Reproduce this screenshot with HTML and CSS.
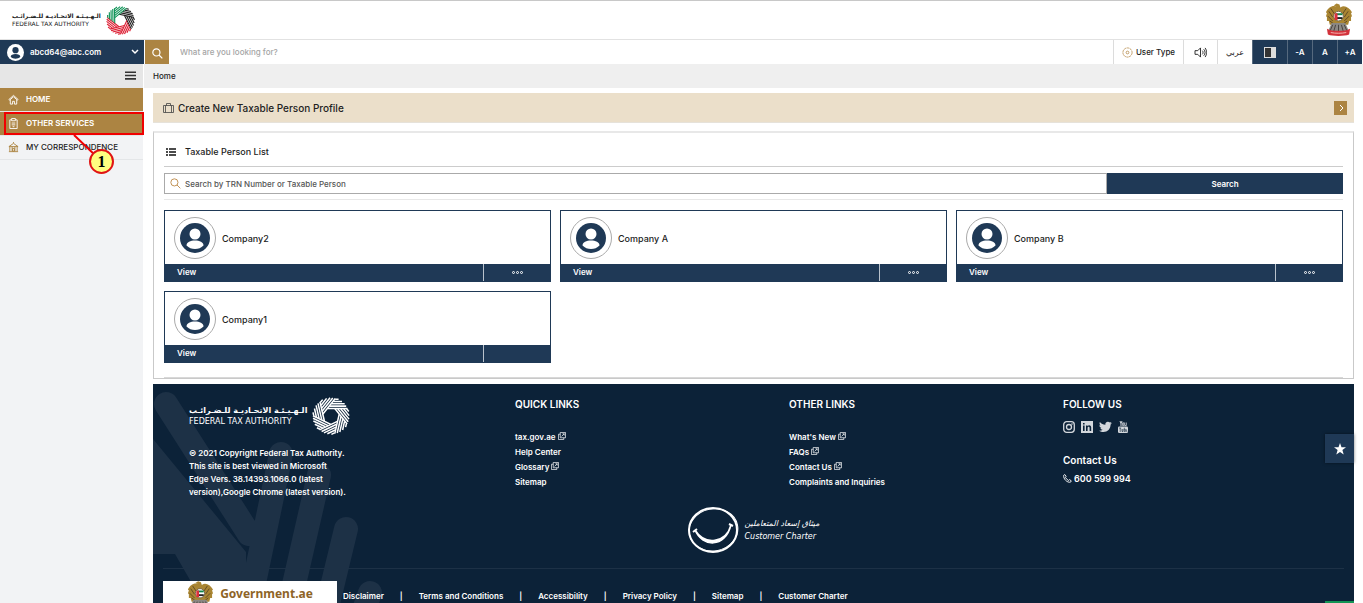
FILE: index.html
```html
<!DOCTYPE html>
<html lang="en">
<head>
  <meta charset="UTF-8">
  <title>Federal Tax Authority</title>
  <link rel="stylesheet" href="styles.css">
</head>
<body>
  <!-- shared icons -->
  <svg class="defs" aria-hidden="true">
    <symbol id="blades" viewBox="-50 -50 100 100" overflow="visible">
      <path d="M-9 -20H43M-4 -26H40M1 -32H36M6 -38H29M11 -44H20"/>
    </symbol>
    <symbol id="user" viewBox="0 0 30 30">
      <circle cx="15" cy="15" r="15" fill="currentColor"/>
      <circle cx="15" cy="11" r="5.5" fill="var(--hole)"/>
      <path d="M6.500 22.500c0-3.500 4-5 8.500-5s8.500 1.500 8.500 5c-2.500 2.500-5 3.500-8.500 3.500s-6-1-8.500-3.500z" fill="var(--hole)"/>
    </symbol>
    <symbol id="search" viewBox="0 0 12 12">
      <circle cx="4.800" cy="4.800" r="3.900"/>
      <path d="M7.600 7.600L11.300 11.300"/>
    </symbol>
    <symbol id="ext" viewBox="0 0 9 9">
      <path d="M2.500.5h6v6h-6zM2.500 2.500h-2v6h6v-2M4 5l3-3M5 2h2v2"/>
    </symbol>
    <symbol id="emblem" viewBox="0 0 28 34">
      <path d="M12 3C8 1 3 4 1 9l1 1-1 3 1 1 0 4 2 0 1 4 3 0 2 3 9 0 2-3 3 0 1-4 2 0 0-4 1-1-1-3 1-1C25 4 20 1 16 4l-1-3-3-1-3 2z" fill="#a98532"/>
      <path d="M4 8l4 6M3 13l5 5M6 5l4 6M24 8l-4 6M25 13l-5 5M22 5l-4 6M5 18l4 3M23 18l-4 3" stroke="#604a25" stroke-width="1" fill="none"/>
      <path d="M7 20h14l4 9H3z" fill="#8b8884"/>
      <path d="M8 22l-3 7M11 22l-2 7M14 22v7M17 22l2 7M20 22l3 7" stroke="#47423e" stroke-width="1"/>
      <path d="M2 26c5 3 19 3 24 0l-1 6c-5 2-17 2-22 0z" fill="#d3323b"/>
      <path d="M6 30c5 1 11 1 16 0" stroke="#f5b4b0" fill="none"/>
      <circle cx="14" cy="13" r="5" fill="#fff" stroke="#766548"/>
      <path d="M11 10h7v2h-7z" fill="#12834a"/>
      <path d="M11 14h7v2h-7z" fill="#222"/>
      <path d="M10 10h3v7h-3z" fill="#dc303b"/>
    </symbol>
  </svg>

  <header class="top">
    <a class="logo" href="#">
      <span class="logo-text">
        <span lang="ar" dir="rtl">الـهـيـئـة الاتحـاديـة للـضـرائـب</span>
        <b>FEDERAL TAX AUTHORITY</b>
      </span>
      <svg class="ring" viewBox="-50 -50 100 100" stroke-width="4" fill="none">
        <g stroke="#222">
          <path transform="rotate(12)" d="M-9 -20H43M-4 -26H40M1 -32H36M6 -38H29M11 -44H20"/>
          <path transform="rotate(63)" d="M-9 -20H43M-4 -26H40M1 -32H36M6 -38H29M11 -44H20"/>
        </g>
        <g stroke="#dd2034">
          <path transform="rotate(115)" d="M-9 -20H43M-4 -26H40M1 -32H36M6 -38H29M11 -44H20"/>
          <path transform="rotate(166)" d="M-9 -20H43M-4 -26H40M1 -32H36M6 -38H29M11 -44H20"/>
          <path transform="rotate(218)" d="M-9 -20H43M-4 -26H40M1 -32H36M6 -38H29M11 -44H20"/>
        </g>
        <g stroke="#13955a">
          <path transform="rotate(269)" d="M-9 -20H43M-4 -26H40M1 -32H36M6 -38H29M11 -44H20"/>
          <path transform="rotate(321)" d="M-9 -20H43M-4 -26H40M1 -32H36M6 -38H29M11 -44H20"/>
        </g>
      </svg>
    </a>
    <svg class="emblem"><use href="#emblem"/></svg>
  </header>

  <div class="toolbar">
    <button class="profile">
      <svg class="profile-pic"><use href="#user"/></svg>
      <span>abcd64@abc.com</span>
      <svg class="chevron" viewBox="0 0 8 6"><path d="M1 1l3 3 3-3"/></svg>
    </button>
    <button class="search-btn" aria-label="Search"><svg><use href="#search"/></svg></button>
    <input class="search-input" type="text" placeholder="What are you looking for?" aria-label="Site search">
    <button class="tool user-type">
      <svg viewBox="0 0 12 12"><circle cx="6" cy="6" r="5" stroke-dasharray="2.600 .6"/><circle cx="6" cy="6" r="1.500"/></svg>
      User Type
    </button>
    <button class="tool sound" aria-label="Listen">
      <svg viewBox="0 0 14 12"><path d="M1 4h3l3-3v10L4 8H1zM9 4c1 1 1 3 0 4M10.500 2.500c2 2 2 5 0 7M12 1c2.200 3 2.200 7 0 10"/></svg>
    </button>
    <button class="tool lang" lang="ar">عربي</button>
    <button class="tool dark contrast" aria-label="Contrast">
      <svg viewBox="0 0 12 11"><path d="M0 0h12v11H0z" fill="#ddd"/><path d="M1 1h6v9H1z" fill="#333"/></svg>
    </button>
    <button class="tool dark">-A</button>
    <button class="tool dark">A</button>
    <button class="tool dark">+A</button>
  </div>

  <div class="layout">
    <aside class="sidebar">
      <button class="menu-toggle" aria-label="Toggle menu">
        <svg viewBox="0 0 10 8"><path d="M0 1h10M0 4h10M0 7h10"/></svg>
      </button>
      <nav>
        <a class="item active" href="#">
          <svg viewBox="0 0 12 12"><path d="M1 6l5-4.500L11 6l-.7.8L6 3 1.700 6.800zM2.500 6.500v4.500h2.500V8h2v3h2.500V6.500"/></svg>
          HOME
        </a>
        <a class="item active" href="#">
          <svg viewBox="0 0 12 12"><path d="M4 2H2v9.500h8V2H8M4 .5h4V3H4zM4 5.500h4M4 7.500h4M5 9.500h2"/></svg>
          OTHER SERVICES
        </a>
        <a class="item" href="#">
          <svg viewBox="0 0 12 12"><path d="M1 5l5-3.500L11 5zM6 1V0M2 5v5M4.500 5v5M7.500 5v5M10 5v5M1 10.500h10M5 7h2v3H5z"/></svg>
          MY CORRESPONDENCE
        </a>
      </nav>
      <div class="callout"></div>
      <svg class="callout-line" viewBox="0 0 28 28"><path d="M1 0l23 22"/></svg>
      <div class="callout-num">1</div>
    </aside>

    <main class="main">
      <div class="breadcrumb">Home</div>

      <div class="content">
        <div class="banner">
          <svg class="case" viewBox="0 0 11 10"><path d="M.5 2.500h10v7H.5zM3.500 2.500v-2h4v2M2.500 2.500v7M8.500 2.500v7"/></svg>
          <span>Create New Taxable Person Profile</span>
          <button class="go" aria-label="Create profile"><svg viewBox="0 0 6 8"><path d="M2 1l3 3-3 3"/></svg></button>
        </div>

        <section class="panel">
          <h2>
            <svg viewBox="0 0 10 8"><path d="M0 1h2M3 1h7M0 4h2M3 4h7M0 7h2M3 7h7"/></svg>
            Taxable Person List
          </h2>
          <form class="filter">
            <svg><use href="#search"/></svg>
            <input type="text" placeholder="Search by TRN Number or Taxable Person" aria-label="Search by TRN Number or Taxable Person">
            <button type="button">Search</button>
          </form>
          <div class="cards">
            <article class="card">
              <div class="card-body"><span class="avatar"><svg><use href="#user"/></svg></span>Company2</div>
              <div class="card-foot"><a href="#">View</a><button aria-label="More"><i></i><i></i><i></i></button></div>
            </article>
            <article class="card">
              <div class="card-body"><span class="avatar"><svg><use href="#user"/></svg></span>Company A</div>
              <div class="card-foot"><a href="#">View</a><button aria-label="More"><i></i><i></i><i></i></button></div>
            </article>
            <article class="card">
              <div class="card-body"><span class="avatar"><svg><use href="#user"/></svg></span>Company B</div>
              <div class="card-foot"><a href="#">View</a><button aria-label="More"><i></i><i></i><i></i></button></div>
            </article>
            <article class="card">
              <div class="card-body"><span class="avatar"><svg><use href="#user"/></svg></span>Company1</div>
              <div class="card-foot"><a href="#">View</a><button aria-label="More"></button></div>
            </article>
          </div>
        </section>

        <footer class="footer">
          <svg class="pattern" viewBox="0 0 240 230">
            <path d="M13 20L96 150M128 70L95 228M166 91L132 240M193 145L170 240M217 209L206 240"/>
            <path class="fill" d="M0 55L93 168V222H52L22 170H0z"/>
          </svg>
          <div class="footer-cols">
            <div class="about">
              <a class="logo light" href="#">
                <span class="logo-text">
                  <span lang="ar" dir="rtl">الـهـيـئـة الاتحـاديـة للـضـرائـب</span>
                  <b>FEDERAL TAX AUTHORITY</b>
                </span>
                <svg class="ring" viewBox="-50 -50 100 100" stroke="#fff" stroke-width="4" fill="none">
                  <path d="M-9 -20H43M-4 -26H40M1 -32H36M6 -38H29M11 -44H20"/>
                  <path transform="rotate(51.430)" d="M-9 -20H43M-4 -26H40M1 -32H36M6 -38H29M11 -44H20"/>
                  <path transform="rotate(102.860)" d="M-9 -20H43M-4 -26H40M1 -32H36M6 -38H29M11 -44H20"/>
                  <path transform="rotate(154.290)" d="M-9 -20H43M-4 -26H40M1 -32H36M6 -38H29M11 -44H20"/>
                  <path transform="rotate(205.710)" d="M-9 -20H43M-4 -26H40M1 -32H36M6 -38H29M11 -44H20"/>
                  <path transform="rotate(257.140)" d="M-9 -20H43M-4 -26H40M1 -32H36M6 -38H29M11 -44H20"/>
                  <path transform="rotate(308.570)" d="M-9 -20H43M-4 -26H40M1 -32H36M6 -38H29M11 -44H20"/>
                </svg>
              </a>
              <p>© 2021 Copyright Federal Tax Authority.<br>This site is best viewed in Microsoft<br>Edge Vers. 38.14393.1066.0 (latest<br>version),Google Chrome (latest version).</p>
            </div>
            <div>
              <h3>QUICK LINKS</h3>
              <ul>
                <li><a href="#">tax.gov.ae <svg><use href="#ext"/></svg></a></li>
                <li><a href="#">Help Center</a></li>
                <li><a href="#">Glossary <svg><use href="#ext"/></svg></a></li>
                <li><a href="#">Sitemap</a></li>
              </ul>
            </div>
            <div>
              <h3>OTHER LINKS</h3>
              <ul>
                <li><a href="#">What's New <svg><use href="#ext"/></svg></a></li>
                <li><a href="#">FAQs <svg><use href="#ext"/></svg></a></li>
                <li><a href="#">Contact Us <svg><use href="#ext"/></svg></a></li>
                <li><a href="#">Complaints and Inquiries</a></li>
              </ul>
            </div>
            <div>
              <h3>FOLLOW US</h3>
              <div class="social">
                <a href="#" aria-label="Instagram"><svg viewBox="0 0 12 12"><g fill="none" stroke="#d3d7dc" stroke-width="1.300"><rect x=".7" y=".7" width="10.600" height="10.600" rx="3"/><circle cx="6" cy="6" r="2.500"/></g><circle cx="9" cy="3" r=".8"/></svg></a>
                <a href="#" aria-label="LinkedIn"><svg viewBox="0 0 12 12"><path fill-rule="evenodd" d="M0 0h12v12H0zM2 4.500V10h1.600V4.500zM2 2v1.600h1.600V2zM5 4.500V10h1.600V7c0-1.600 2-1.600 2 0v3h1.600V6.500c0-2.300-2.600-2.800-3.600-1.300v-.7z"/></svg></a>
                <a href="#" aria-label="Twitter"><svg class="wide" viewBox="0 0 13 12"><path d="M13 2.200l-1.400 1.300C11.600 8 8.500 11 4.500 11 3 11 1.300 10.600 0 9.800c1.500.1 2.700-.3 3.800-1.100C2.600 8.600 1.800 8 1.400 6.900h1.100C1.200 6.500.4 5.500.4 4.200l1.200.3C.5 3.600.2 2.200.9 1c1.500 1.700 3.200 2.600 5.500 2.800C6 2 7.200.7 8.900.7c.8 0 1.500.3 2 .8l1.600-.6-1 1.500z"/></svg></a>
                <a href="#" aria-label="YouTube"><svg class="slim" viewBox="0 0 10 12"><path d="M2 0l1 2.500V5M4 0L3 2.500" fill="none" stroke="#d3d7dc"/><path d="M4.600 1.800h1.200v2.700H4.600zM6.700 1.500v3h1.600v-3" fill="none" stroke="#d3d7dc" stroke-width=".8"/><rect y="5.500" width="10" height="6.500" rx="1.300"/><path d="M1.200 7h2M2.200 7v4M4 8v2.500h1V8M6.300 6.700V10.500h1V8.300h-1M8.300 8.300v2h1" fill="none" stroke="#0c2238" stroke-width=".6"/></svg></a>
              </div>
              <h3 class="contact">Contact Us</h3>
              <a class="phone" href="tel:600599994">
                <svg viewBox="0 0 10 10"><path d="M.7 1.500L2 .6l1.500 2-.9 1c.7 1.500 1.900 2.700 3.600 3.600l1-1 2 1.400-.9 1.500C4.500 9.800.3 5.500.7 1.500z"/></svg>
                600 599 994
              </a>
            </div>
          </div>
          <div class="charter">
            <svg viewBox="0 0 52 48">
              <ellipse cx="26" cy="24" rx="24" ry="22" stroke-width="2"/>
              <ellipse cx="26.500" cy="24" rx="24.500" ry="21" stroke-width="1" transform="rotate(-12 26 24)"/>
              <path d="M8 24C15 41 38 43 44 19C39 37 18 40 8 24z" fill="#fff" stroke-width="1.500"/>
              <path d="M6 26l4-3M42 18l4 2" stroke-width="2"/>
            </svg>
            <span>
              <span class="charter-ar" lang="ar" dir="rtl">ميثاق إسعاد المتعاملين</span>
              <span class="charter-en">Customer Charter</span>
            </span>
          </div>
          <div class="footer-bottom">
            <a class="gov" href="#"><svg><use href="#emblem"/></svg>Government.ae</a>
            <nav class="legal">
              <a href="#">Disclaimer</a>
              <a href="#">Terms and Conditions</a>
              <a href="#">Accessibility</a>
              <a href="#">Privacy Policy</a>
              <a href="#">Sitemap</a>
              <a href="#">Customer Charter</a>
            </nav>
          </div>
        </footer>
      </div>
    </main>
  </div>

  <button class="fav" aria-label="Favourites"><svg viewBox="0 0 12 12"><path d="M6 0l1.500 4.200H12L8.400 7l1.300 4.600L6 9 2.300 11.600 3.600 7 0 4.200h4.500z"/></svg></button>
  <button class="chat" aria-label="Chat"></button>
</body>
</html>
```
FILE: styles.css
```css
* {
  box-sizing: border-box;
}

body {
  margin: 0;
  height: 100vh;
  overflow: hidden;
  background: #fff;
  color: #222;
  font-family: Inter, "Open Sans", "DejaVu Sans", sans-serif;
  font-size: 8px;
  font-weight: 500;
}

a {
  color: inherit;
  text-decoration: none;
}

button {
  font: inherit;
  color: inherit;
  border: none;
  padding: 0;
  background: none;
  cursor: pointer;
}

input {
  font: inherit;
  outline: none;
}

svg {
  flex: none;
  display: block;
}

.defs {
  display: none;
}

/* header */
.top {
  display: flex;
  justify-content: space-between;
  align-items: center;
  height: 40px;
  padding: 0 11px 0 12px;
  border-top: 1px solid #c8c8c8;
  border-bottom: 1px solid #e2e2e2;
}

.logo {
  display: flex;
  align-items: center;
  gap: 5px;
}

.logo-text {
  display: flex;
  flex-direction: column;
  font-family: "DejaVu Sans", sans-serif;
  font-size: 6px;
  line-height: 8px;
  white-space: nowrap;
}

.logo-text span {
  font-weight: bold;
}

.logo-text b {
  font-weight: normal;
}

.ring {
  width: 29px;
  height: 29px;
}

.emblem {
  width: 27px;
  height: 34px;
}

/* toolbar */
.toolbar {
  display: flex;
  height: 24px;
  padding-right: 1px;
}

.profile {
  --hole: #1f3956;
  display: flex;
  align-items: center;
  gap: 6px;
  width: 144px;
  padding: 0 5px 0 7px;
  background: #1f3956;
  color: #fff;
  font-weight: 600;
}

.profile-pic {
  width: 17px;
  height: 17px;
}

.chevron {
  width: 8px;
  height: 6px;
  margin-left: auto;
  fill: none;
  stroke: #fff;
  stroke-width: 1.5;
}

.search-btn {
  width: 24px;
  margin-left: 1px;
  background: #ac8442;
}

.search-btn svg {
  width: 11px;
  height: 11px;
  margin: 2px auto 0;
  fill: none;
  stroke: #fff;
  stroke-width: 1.3;
}

.search-input {
  flex: 1;
  min-width: 0;
  border: none;
  padding: 0 11px;
}

.search-input::placeholder {
  color: #a5a5a5;
}

.tool {
  display: flex;
  align-items: center;
  justify-content: center;
  width: 25px;
  border-left: 1px solid #dcdcdc;
}

.user-type {
  width: 70px;
  gap: 3px;
}

.user-type svg {
  width: 11px;
  height: 11px;
  fill: none;
  stroke: #bc955c;
  stroke-width: 1;
}

.sound {
  width: 34px;
}

.sound svg {
  width: 13px;
  height: 11px;
  fill: none;
  stroke: #222;
}

.lang {
  width: 35px;
  font-family: "DejaVu Sans", sans-serif;
}

.dark {
  background: #1f3956;
  color: #fff;
  font-weight: 600;
  border-left-color: #56697e;
}

.contrast {
  width: 35px;
}

.contrast svg {
  width: 12px;
  height: 11px;
}

/* sidebar */
.layout {
  display: flex;
}

.sidebar {
  position: relative;
  width: 144px;
  min-height: 100vh;
  background: #f2f3f5;
  border-right: 1px solid #fff;
}

.menu-toggle {
  display: flex;
  align-items: center;
  justify-content: flex-end;
  width: 100%;
  height: 24px;
  padding: 0 7px 2px;
  background: #e6e6e6;
}

.menu-toggle svg {
  width: 11px;
  height: 9px;
  stroke: #333;
  stroke-width: 1.5;
}

.item {
  display: flex;
  align-items: center;
  gap: 7px;
  height: 24px;
  padding: 0 0 1px 8px;
  border-bottom: 1px solid #e4e6e8;
}

.item.active {
  background: #ac8442;
  color: #fff;
  font-weight: 600;
}

.item svg {
  width: 11px;
  height: 11px;
  fill: none;
  stroke: #ac8442;
}

.item.active svg {
  stroke: #fff;
}

/* numbered marker over the menu */
.callout {
  position: absolute;
  top: 48px;
  left: 4px;
  right: -1px;
  height: 23px;
  border: 2px solid #f00000;
}

.callout-line {
  position: absolute;
  top: 71px;
  left: 73px;
  width: 28px;
  height: 28px;
  fill: none;
  stroke: #f00000;
  stroke-width: 2;
}

.callout-num {
  position: absolute;
  top: 85px;
  left: 89px;
  width: 25px;
  height: 25px;
  border: 2px solid #e01414;
  border-radius: 50%;
  background: #ffff80;
  color: #000;
  font: bold 16px/21px "Liberation Serif", serif;
  text-align: center;
}

/* main */
.main {
  flex: 1;
  min-width: 0;
}

.breadcrumb {
  height: 24px;
  padding-left: 9px;
  background: #efefef;
  line-height: 25px;
}

.content {
  padding: 5px 9px 0;
}

.banner {
  display: flex;
  align-items: center;
  gap: 4px;
  height: 30px;
  padding: 0 7px 0 10px;
  background: #ebdfca;
  border-bottom: 1px solid #e6e2da;
  font-size: 10px;
}

.case {
  width: 11px;
  height: 10px;
  fill: none;
  stroke: #444;
  stroke-width: .8;
}

.go {
  display: flex;
  align-items: center;
  justify-content: center;
  width: 13px;
  height: 14px;
  margin-left: auto;
  background: #ac8442;
}

.go svg {
  width: 6px;
  height: 8px;
  fill: none;
  stroke: #fff;
}

.panel {
  margin-top: 8px;
  padding: 0 10px;
  border: 1px solid #c9c9c9;
  border-top: 2px solid #e8e8e8;
}

.panel h2 {
  display: flex;
  align-items: center;
  gap: 9px;
  height: 34px;
  margin: 0;
  padding: 4px 0 0 2px;
  border-bottom: 1px solid #ccc;
  font-size: 9px;
  font-weight: 500;
}

.panel h2 svg {
  width: 10px;
  height: 8px;
  stroke: #111;
  stroke-width: 1.6;
}

.filter {
  position: relative;
  display: flex;
  margin-top: 6px;
  padding-bottom: 5px;
  border-bottom: 1px solid #e8e8e8;
}

.filter svg {
  position: absolute;
  top: 5px;
  left: 6px;
  width: 11px;
  height: 11px;
  fill: none;
  stroke: #bc8a48;
}

.filter input {
  flex: 1;
  min-width: 0;
  height: 21px;
  padding: 0 20px;
  border: 1px solid #aaa;
}

.filter input::placeholder {
  color: #555;
}

.filter button {
  width: 20%;
  background: #1f3956;
  color: #fff;
  font-weight: 600;
}

.cards {
  display: grid;
  grid-template-columns: repeat(3, 1fr);
  gap: 9px;
  padding: 10px 0 14px;
  border-bottom: 1px solid #d8d8d8;
}

.card {
  border: 1px solid #1f3956;
}

.card-body {
  --hole: #fff;
  display: flex;
  align-items: center;
  gap: 6px;
  height: 53px;
  padding: 1px 9px 0;
  font-size: 9px;
}

.avatar {
  display: flex;
  align-items: center;
  justify-content: center;
  width: 42px;
  height: 42px;
  border: 1px solid #aaa;
  border-radius: 50%;
  color: #1f3956;
}

.avatar svg {
  width: 30px;
  height: 30px;
}

.card-foot {
  display: flex;
  height: 17px;
  background: #1f3956;
  color: #fff;
  font-weight: 600;
}

.card-foot a {
  flex: 1;
  padding-left: 12px;
  line-height: 17px;
}

.card-foot button {
  display: flex;
  justify-content: center;
  align-items: center;
  gap: 1px;
  width: 67px;
  padding-right: 0;
  border-left: 1px solid #b9c2cc;
}

.card-foot i {
  width: 3px;
  height: 3px;
  border: 1px solid #fff;
  border-radius: 50%;
}

/* footer */
.footer {
  position: relative;
  margin-top: 5px;
  background: #0c2238;
  color: #fff;
  font-weight: 600;
  overflow: hidden;
}

.pattern {
  position: absolute;
  top: 0;
  left: 0;
  width: 240px;
  height: 230px;
  fill: none;
  stroke: #1d3146;
  stroke-width: 24;
  stroke-linecap: round;
}

.pattern .fill {
  fill: #1d3146;
  stroke: none;
}

.footer-cols {
  position: relative;
  display: grid;
  grid-template-columns: 326fr 274fr 274fr 274fr;
  padding: 13px 17px 0 36px;
}

.light .ring {
  width: 38px;
  height: 38px;
}

.light .logo-text {
  font-size: 8px;
  line-height: 11px;
}

.about p {
  margin: 12px 0 0;
  line-height: 13px;
}

.footer h3 {
  margin: 0;
  font-size: 10px;
  line-height: 14px;
  font-weight: 600;
}

.footer ul {
  list-style: none;
  margin: 19px 0 0;
  padding: 0;
  line-height: 15px;
}

.footer li svg {
  display: inline-block;
  width: 8px;
  height: 8px;
  fill: none;
  stroke: #fff;
  stroke-width: .8;
}

.social {
  display: flex;
  gap: 6px;
  margin-top: 10px;
}

.social svg {
  width: 12px;
  height: 12px;
  fill: #d3d7dc;
}

.social .wide {
  width: 13px;
}

.social .slim {
  width: 10px;
}

.footer .contact {
  margin-top: 20px;
}

.phone {
  display: flex;
  align-items: center;
  gap: 2px;
  margin-top: 6px;
  font-size: 9px;
}

.phone svg {
  width: 9px;
  height: 9px;
  fill: none;
  stroke: #fff;
}

.charter {
  position: relative;
  display: flex;
  align-items: center;
  justify-content: center;
  gap: 5px;
  margin-top: 7px;
}

.charter svg {
  width: 52px;
  height: 48px;
  fill: none;
  stroke: #fff;
}

.charter-ar,
.charter-en {
  display: block;
  font: italic 8px/13px "DejaVu Sans", sans-serif;
}

.footer-bottom {
  position: relative;
  display: flex;
  align-items: flex-start;
  margin: 14px 10px 0;
  padding-top: 12px;
  border-top: 1px solid #1d3146;
}

.gov {
  display: flex;
  justify-content: center;
  gap: 7px;
  width: 174px;
  height: 40px;
  background: #fff;
  color: #8e6427;
  font: bold 12px/26px "Noto Sans", sans-serif;
}

.gov svg {
  width: 26px;
  height: 32px;
}

.legal {
  display: flex;
  padding: 10px 0 0 6px;
}

.legal a + a::before {
  content: "|";
  margin: 0 16px;
}

/* floating buttons */
.fav,
.chat {
  position: fixed;
  right: 9px;
  width: 29px;
  height: 29px;
}

.fav {
  top: 434px;
  background: #1f3956;
  box-shadow: 0 0 3px rgba(0, 0, 0, .5);
}

.fav svg {
  width: 12px;
  height: 12px;
  margin: 0 auto;
  fill: #fff;
}

.chat {
  top: 601px;
  background: #129455;
}
```
